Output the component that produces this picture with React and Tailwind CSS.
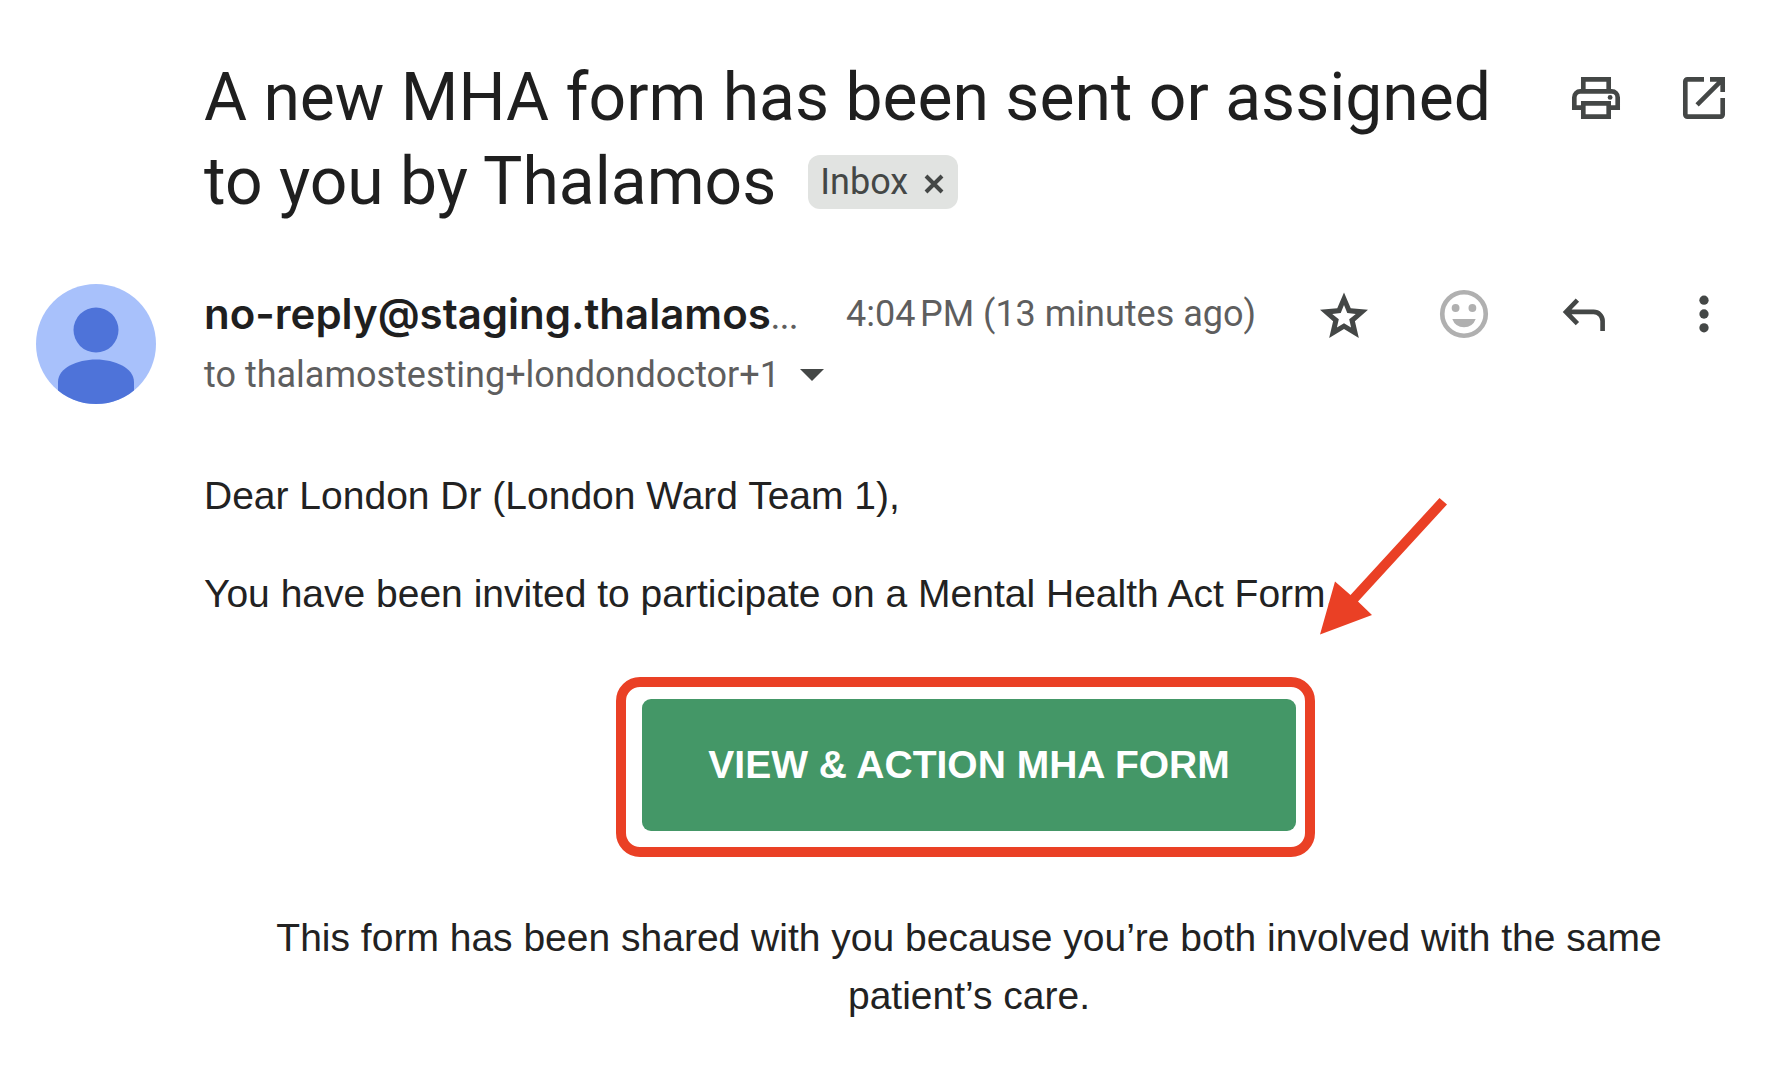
const IconButton = ({ label, children, viewBox = '0 0 20 20', className = 'text-[#444746]' }) => (
  <button type="button" aria-label={label} className={`block size-[60px] shrink-0 ${className}`}>
    <svg viewBox={viewBox} fill="none" stroke="currentColor" strokeWidth="1.55" className="size-full">
      {children}
    </svg>
  </button>
);

const Avatar = () => (
  <svg viewBox="0 0 120 120" className="size-[120px] shrink-0 rounded-full bg-[#a8c1fb]">
    <circle cx="60" cy="46" r="22.5" fill="#4e73d9" />
    <path d="M22 120V98C22 84 41 75.500 60 75.500S98 84 98 98V120Z" fill="#4e73d9" />
  </svg>
);

const Subject = () => (
  <div className="flex items-start pl-[204px]">
    <div className="flex-1 text-[66px] leading-[84px] text-[#1f1f1f]">
      <h1 className="inline font-normal">
        A new MHA form has been sent or assigned
        <br />
        to you by Thalamos
      </h1>
      <span className="mb-[10px] ml-8 inline-flex h-[54px] items-center gap-4 rounded-xl bg-[#e1e3e1] pr-[14px] pl-3 align-middle text-[36px] text-[#444746]">
        Inbox
        <button type="button" aria-label="Remove label Inbox" className="pt-1">
          <svg viewBox="0 0 20 20" fill="none" stroke="currentColor" strokeWidth="4" className="size-5">
            <path d="M2 2 18 18M18 2 2 18" />
          </svg>
        </button>
      </span>
    </div>
    <div className="flex gap-12 pt-3">
      <IconButton label="Print">
        <path d="M5.770 7.500V3.770h8.460V7.500M5.500 13.230H2.770V9.800a2 2 0 0 1 2-2h10.460a2 2 0 0 1 2 2v3.430H14.500M5.770 11.770h8.460v4.460H5.770Z" />
        <circle cx="14.700" cy="9.800" r=".8" fill="currentColor" stroke="none" />
      </IconButton>
      <IconButton label="Open in new window">
        <path d="M10 3.770H4.470a.7.7 0 0 0-.7.7v11.060a.7.7 0 0 0 .7.7h11.060a.7.7 0 0 0 .7-.7V10M12 3.770h4.230V8M16.200 3.800 7.700 12.300" />
      </IconButton>
    </div>
  </div>
);

const Sender = () => (
  <div className="flex items-start gap-12">
    <Avatar />
    <div className="min-w-0 flex-1">
      <div className="flex items-center gap-12 leading-[60px] whitespace-nowrap">
        <div className="font-['Inter',sans-serif] text-[42px] font-semibold text-[#1f1f1f]">
          no-reply@staging.thalamos<span className="text-[30px] font-medium text-[#5e5e5e]">…</span>
        </div>
        <time className="pb-1 text-[36px] text-[#5e5e5e]">4:04{'\u202f'}PM (13 minutes ago)</time>
      </div>
      <div className="flex items-center gap-5 text-[36px] leading-[54px] text-[#5e5e5e]">
        to thalamostesting+londondoctor+1
        <button type="button" aria-label="Show details">
          <svg viewBox="0 0 24 12" fill="#444746" className="h-3 w-6">
            <path d="M0 0h24L12 12Z" />
          </svg>
        </button>
      </div>
    </div>
    <div className="flex gap-[60px]">
      <IconButton label="Star" viewBox="-0.5 -1.5 25 25">
        <path
          fill="currentColor"
          stroke="none"
          d="M22 9.240l-7.190-.62L12 2 9.190 8.630 2 9.240l5.460 4.730L5.820 21 12 17.270 18.180 21l-1.630-7.030L22 9.240zM12 14.900l-2.950 1.750.78-3.430L7.100 10.950l3.540-.32L12 7.300l1.360 3.330 3.540.32-2.730 2.270.78 3.430z"
        />
      </IconButton>
      <IconButton label="Add reaction" className="text-[#b0b0b0]">
        <circle cx="10" cy="10" r="7.250" />
        <g fill="currentColor" stroke="none">
          <circle cx="7.200" cy="8" r="1.300" />
          <circle cx="12.800" cy="8" r="1.300" />
          <path d="M6.100 11.700h7.800a4.150 4.150 0 0 1-7.800 0Z" />
        </g>
      </IconButton>
      <IconButton label="Reply">
        <path d="M7.800 5.400 4 9.300l3.800 3.900M4 9.300h9.200a3 3 0 0 1 3 3v3.400" />
      </IconButton>
      <IconButton label="More">
        <g fill="currentColor" stroke="none">
          <circle cx="10" cy="5.400" r="1.550" />
          <circle cx="10" cy="10" r="1.550" />
          <circle cx="10" cy="14.600" r="1.550" />
        </g>
      </IconButton>
    </div>
  </div>
);

const Message = () => (
  <div className="pr-[28px] pl-[168px] font-['Liberation_Sans',Arial,sans-serif] text-[39px] leading-[58px] text-[#222222]">
    <p>Dear London Dr (London Ward Team 1),</p>
    <p className="mt-10">You have been invited to participate on a Mental Health Act Form.</p>
    <div className="mt-[76px] text-center">
      <div className="relative inline-block align-top">
        <a href="#form" className="block rounded-[9px] bg-[#449767] px-[66px] py-[37px] font-bold text-white">
          VIEW &amp; ACTION MHA FORM
        </a>
        {/* Highlight around the button, with its pointer */}
        <div className="pointer-events-none absolute -top-[22px] -right-[19px] -bottom-[26px] -left-[26px] rounded-3xl border-[10px] border-[#ea4025]" />
        <svg viewBox="0 0 128 138" className="pointer-events-none absolute -top-[202px] left-full ml-6 h-[138px] w-[128px]">
          <path d="M0 137.500 15 84.500 30.500 98 119.500 1 127 7.500 38 104.500 52 118Z" fill="#ea4025" />
        </svg>
      </div>
    </div>
    <p className="mx-auto mt-[78px] max-w-[1400px] text-center">
      This form has been shared with you because you’re both involved with the same patient’s care.
    </p>
  </div>
);

export default function App() {
  return (
    <main className="min-h-screen bg-white pt-14 font-['Roboto',sans-serif]">
      <div className="pr-[58px]">
        <Subject />
      </div>
      <div className="mt-[60px] pr-[58px] pl-9">
        <Sender />
      </div>
      <div className="mt-[63px] pr-[30px] pl-9">
        <Message />
      </div>
    </main>
  );
}
